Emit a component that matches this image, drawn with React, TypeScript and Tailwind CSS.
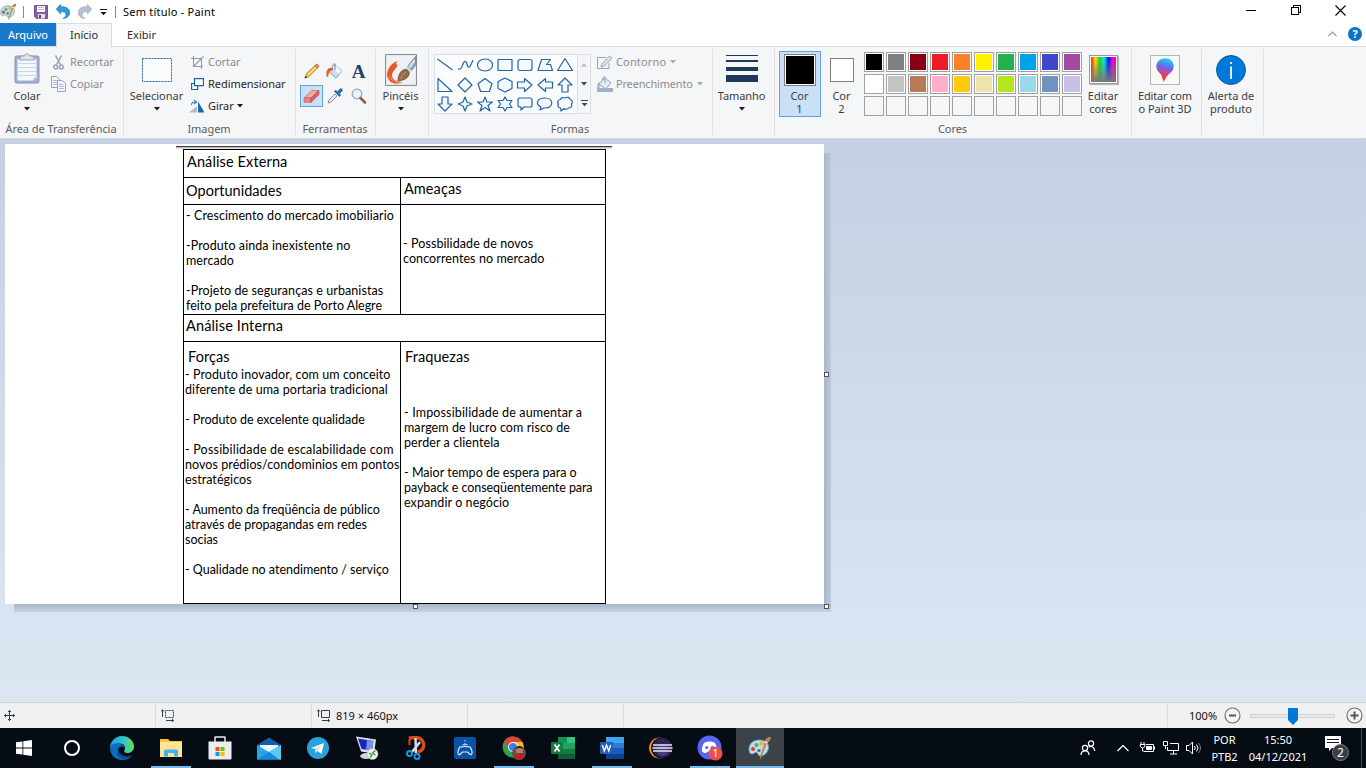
import React from "react";

type Kids = { children?: React.ReactNode };

const Down = ({ c = "#1a1a1a" }: { c?: string }) => (
  <svg width="6" height="4" viewBox="0 0 6 4" className="shrink-0"><path d="M0 0h6L3 3.4z" fill={c} /></svg>
);

function Group({ w, label, children }: Kids & { w: string; label?: string }) {
  return (
    <div className={`${w} mt-[2px] flex h-[86px] shrink-0 flex-col border-r border-[#dfe1e3]`}>
      <div className="flex h-[73px]">{children}</div>
      <div className="-ml-px h-4 whitespace-nowrap pt-px text-center leading-[17px] tracking-[-0.05px] text-[#5c5c5c]">{label}</div>
    </div>
  );
}

function Row({ icon, text, off, arrow }: { icon: React.ReactNode; text: string; off?: boolean; arrow?: boolean }) {
  return (
    <div className={`flex h-[22px] items-center ${off ? "text-[#8d8d8d]" : "text-[#262626]"}`}>
      <span className="flex w-[17px] shrink-0 items-center">{icon}</span>
      <span className="whitespace-nowrap tracking-[-0.05px]">{text}</span>
      {arrow && <span className="ml-[3px]"><Down c={off ? "#ababab" : "#1a1a1a"} /></span>}
    </div>
  );
}

const PaintIcon = ({ size }: { size: number }) => (
  <svg width={size} height={size} viewBox="0 0 24 24">
    <path d="M1 13C1 7 6 3.500 12 4c6 .3 9 4 8.500 8-.6 5-5 8.500-8.500 8-2.500-.5-1.500-3-3.500-3.500S5.500 18.500 3.500 18 1 15.500 1 13z" fill="#b8def0" stroke="#4f9fc5" strokeWidth=".9" />
    <circle cx="5" cy="13" r="2" fill="#e23b2e" /><circle cx="8.500" cy="9" r="2" fill="#55b53c" />
    <circle cx="13.500" cy="7.500" r="2" fill="#f4b51e" /><circle cx="11" cy="14.500" r="1.600" fill="#2b6f94" />
    <path d="M19 6.500 13 21.500l-1 2 .2-2.500L17 6z" fill="#e88b2b" stroke="#b9651a" strokeWidth=".4" />
    <path d="M17 5.500c0-3 3-5 6-4.500-.3 3-1.500 5-4 5.800z" fill="#b98252" />
    <path d="m16.500 6.500 2.800 1 .5-1.400-2.600-1z" fill="#e8e8e8" />
  </svg>
);

function TitleBar() {
  return (
    <div className="flex h-[23px] items-center bg-white text-black">
      <div className="flex w-[23px]"><PaintIcon size={17} /></div>
      <div className="h-3 w-px bg-[#8a8a8a]" />
      <svg className="ml-[10px]" width="14" height="14" viewBox="0 0 14 14">
        <path d="M.5.500h13v13h-11l-2-2z" fill="#8b5da8" stroke="#7a4f99" /><path d="M3 1h8v6H3z" fill="#fff" />
        <path d="M4 2.500h6M4 4.500h6" stroke="#c9b6d6" /><path d="M4 9h7v4.500H4z" fill="#e7deef" /><path d="M5 10h2v3H5z" fill="#5d3479" />
      </svg>
      <svg className="ml-[8px]" width="14" height="15" viewBox="0 0 14 15">
        <path d="M4.500.500v2.300c6-.4 9.200 1.900 9.200 5.900 0 3.200-2.700 5.400-6.700 5.900 2-1.500 3.200-2.700 3-4.400-.3-2.100-2.300-2.800-5.500-2.500v2.300L.3 5z" fill="#2f9add" stroke="#2585c5" strokeWidth=".8" />
      </svg>
      <svg className="ml-[8px]" width="14" height="15" viewBox="0 0 14 15">
        <path d="M9.500.500v2.300C3.500 2.400.3 4.700.3 8.700c0 3.200 2.700 5.400 6.700 5.900-2-1.500-3.200-2.700-3-4.400.3-2.100 2.300-2.800 5.500-2.500v2.300L13.700 5z" fill="#b5c1d0" stroke="#a1afc1" strokeWidth=".8" />
      </svg>
      <svg className="ml-[8px]" width="7" height="8" viewBox="0 0 7 8"><path d="M0 1.500h7" stroke="#111" /><path d="M.5 4h6l-3 3.200z" fill="#111" /></svg>
      <div className="ml-[8px] h-3 w-px bg-[#8a8a8a]" />
      <span className="ml-[7px] grow whitespace-pre tracking-[0.22px]">Sem título - Paint</span>
      <svg className="mr-[34px]" width="11" height="11"><path d="M0 4.500h10" stroke="#000" /></svg>
      <svg className="mr-[33px] -mt-[2px]" width="11" height="11" viewBox="0 0 11 11" fill="none" stroke="#000" shapeRendering="crispEdges"><path d="M.5 2.500h7v7h-7zM2.500 2.500v-2h7v7h-2" /></svg>
      <svg className="mr-[20px] -mt-[2px]" width="11" height="11" viewBox="0 0 11 11" stroke="#000" strokeWidth="1.100"><path d="m.5.500 10 10M10.500.500l-10 10" /></svg>
    </div>
  );
}

function Tabs() {
  return (
    <div className="flex h-6 border-b border-[#dadbdc] bg-white text-[#2b2b2b]">
      <div className="h-[23px] w-14 bg-[#1979ca] text-center leading-[23px] text-white">Arquivo</div>
      <div className="z-10 h-6 w-14 border-x border-t border-[#dadbdc] bg-[#f5f6f7] text-center leading-[21px]">Início</div>
      <div className="grow pl-[15px] leading-[24px]">Exibir</div>
      <svg className="mr-[11px] mt-[8px]" width="9" height="6" viewBox="0 0 9 6" fill="none" stroke="#9b9b9b" strokeWidth="1.200"><path d="m.5 5 4-4 4 4" /></svg>
      <div className="mr-[4px] mt-[4px] h-[14px] w-[14px] rounded-full bg-[#0c71c9] text-center text-[11px] font-bold leading-[14px] text-white">?</div>
    </div>
  );
}

const Clipboard = () => (
  <svg width="26" height="31" viewBox="0 0 26 31">
    <rect x="1" y="3" width="24" height="27" rx="1.500" fill="#9fb1d1" stroke="#8296b8" />
    <path d="M3.500 6h19v18.500l-3 3h-16z" fill="#f4f7fc" /><path d="M4 10.500h18M4 14.500h18M4 18.500h18M4 22.500h18" stroke="#c9d5e8" />
    <path d="M7 3h3.500c0-3 5-3 5 0H19l1.500 4h-15z" fill="#dde2e9" stroke="#8c97a8" strokeWidth=".8" /><path d="m19.500 27.500 3-3h-3z" fill="#b9c8e0" />
  </svg>
);

const BlueShape = ({ d }: { d: string }) => (
  <svg className="h-[19.500px] w-5" viewBox="0 0 20 19.500"><path d={d} fill="#f4f9fd" stroke="#2465a3" strokeWidth="1.200" strokeLinejoin="round" /></svg>
);

const shapes = [
  "M2.500 4 17.500 15",
  "M3 14c3 1 4-2 5-5s3-4 4 0 2 6 6-4M3 14c3 1 4-2 5-5s3-4 4 0 2 6 6-4",
  "M10 4c10 0 10 12 0 12S0 4 10 4z",
  "M3 4.500h14v11H3z",
  "M5 4.500h10a2 2 0 0 1 2 2v7a2 2 0 0 1-2 2H5a2 2 0 0 1-2-2v-7a2 2 0 0 1 2-2z",
  "M3 15.500 6.500 4.500h9l-4 5h4l2 6z",
  "M10 3.500 17.500 15.500h-15z",
  "M3 3.500 17 16.500H3z",
  "m10 3 7 7-7 7-7-7z",
  "m10 3.500 7 5.300-2.600 7.700H5.600L3 8.800z",
  "m10 3 7 3.500v7L10 17l-7-3.500v-7z",
  "M2.500 7h7V3.500L17 10l-7.500 6.500V13h-7z",
  "M17.500 7h-7V3.500L3 10l7.500 6.500V13h7z",
  "M7 17v-7H3l7-7 7 7h-4v7z",
  "M7 3v7H3l7 7 7-7h-4V3z",
  "M10 3l2 5 5 2-5 2-2 5-2-5-5-2 5-2z",
  "m10 3 2 5h5.500L13 11.500l2 5.500-5-3.500L5 17l2-5.500L2.500 8H8z",
  "m10 3 2 3.500h5L14.500 10l2.500 3.500h-5L10 17l-2-3.500H3L5.500 10 3 6.500h5z",
  "M5 4h10q2 0 2 2v5q0 2-2 2H9l-3 3v-3H5q-2 0-2-2V6q0-2 2-2z",
  "M10 4c9 0 9 10 0 10H9l-4 2 1-3C0 10 2 4 10 4z",
  "M5.500 5.500c.5-2 3-2.500 4.500-1.500 2-1.500 5-.5 5 1.500 2.500.5 3 3 1.500 4.500 1 2.500-.5 4-3 4-1 1.500-3.500 1.500-4.500.5L6 17l-.3-3c-2.500 0-3.500-2-2.200-4C1.500 8.500 3 5.500 5.500 5.500z",
];

const row1 = ["#000000", "#7f7f7f", "#880015", "#ed1c24", "#ff7f27", "#fff200", "#22b14c", "#00a2e8", "#3f48cc", "#a349a4"];
const row2 = ["#ffffff", "#c3c3c3", "#b97a57", "#ffaec9", "#ffc90e", "#efe4b0", "#b5e61d", "#99d9ea", "#7092be", "#c8bfe7"];
const swatches = [...row1, ...row2, ...Array.from({ length: 10 }, () => "")];

function Ribbon() {
  return (
    <div className="flex h-[92px] border-b border-[#d5d7da] bg-[#f5f6f7] text-[#3c3c3c]">
      <Group w="w-[124px]" label="Área de Transferência">
        <div className="ml-[5px] flex w-11 flex-col items-center pt-[4px]">
          <Clipboard /><span className="mt-[4px] leading-4">Colar</span><span className="mt-[3px]"><Down /></span>
        </div>
        <div className="ml-[4px] pt-[2px]">
          <Row off text="Recortar" icon={
            <svg width="11" height="15" viewBox="0 0 11 15" fill="none" stroke="#93a4be" strokeWidth="1.500"><path d="M2.500.500 7.700 10M8.500.500 3.300 10" /><circle cx="2.700" cy="12" r="1.900" /><circle cx="8.300" cy="12" r="1.900" /></svg>} />
          <Row off text="Copiar" icon={
            <svg className="-ml-[2px]" width="16" height="16" viewBox="0 0 16 16" fill="#f1f5fa" stroke="#91a5c4"><path d="M.5.500h5l3 3v8h-8z" /><path d="M2 4.500h4M2 6.500h4M2 8.500h4" strokeWidth=".7" /><path d="M6.500 4.500h5l3 3v8h-8z" /><path d="M8 8.500h4M8 10.500h5M8 12.500h5" strokeWidth=".7" /></svg>} />
        </div>
      </Group>
      <Group w="w-[172px]" label="Imagem">
        <div className="ml-[4px] flex w-[57px] flex-col items-center pt-[9px]">
          <svg width="30" height="24" viewBox="0 0 30 24"><path d="M.5.500h29v23H.5z" fill="#f9fbfd" stroke="#1c64a8" strokeDasharray="2 1" /></svg>
          <span className="mt-[6px] leading-4">Selecionar</span><span className="mt-[3px]"><Down /></span>
        </div>
        <div className="ml-[6px] pt-[2px]">
          <Row off text="Cortar" icon={
            <svg width="13" height="13" viewBox="0 0 13 13" fill="none" stroke="#8d9bb2" strokeWidth="1.100"><path d="M2.500 0v10.500H12M0 2.500h10.500V13M3 10l9.500-9.500" /></svg>} />
          <Row text="Redimensionar" icon={
            <svg width="13" height="12" viewBox="0 0 13 12" fill="#fff" stroke="#1c66a8" strokeWidth="1.200"><path d="M.6 5.500h6v6h-6z" /><path d="M3.500.600h9v7h-9z" /></svg>} />
          <Row arrow text="Girar" icon={
            <svg className="-ml-[2px]" width="16" height="13" viewBox="0 0 16 13"><path d="M0 12.500 8 6v6.500z" fill="#b4bcc5" /><path d="M9 1.500 15.500 12.500H9z" fill="#1b68ac" /><path d="M2.500 5c0-2.500 1.500-3 4-3M5 0l2.500 2L5 4" stroke="#3089d0" fill="none" strokeWidth="1.200" /></svg>} />
        </div>
      </Group>
      <Group w="w-[80px]" label="Ferramentas">
        <div className="ml-[4px] mt-[11px] grid h-[50px] grid-cols-[23px_24px_23px] grid-rows-[22px_28px] place-items-center">
          <svg width="16" height="16" viewBox="0 0 16 16"><path d="m1 15 1.500-4.500L11.500 2l2.500 2.500L5.500 13z" fill="#f3c64f" stroke="#a07822" strokeWidth=".8" /><path d="m10.700 2.800 1.500-1.500c1-1 3.500 1.500 2.500 2.500l-1.500 1.500z" fill="#e58d7b" stroke="#a85848" strokeWidth=".6" /><path d="m.5 15.500.9-2.700 1.800 1.800z" fill="#333" /><path d="m4 12 8-8" stroke="#fff0b0" /></svg>
          <svg width="18" height="16" viewBox="0 0 18 16"><path d="m9 2 7 6-6 7-7-6z" fill="#cddeee" stroke="#6a8bac" strokeWidth=".8" /><path d="m9 2 7 6-3 3-7-6z" fill="#edf5fb" /><path d="M9 7V.8c-2 0-2.500 1.200-2.500 3" stroke="#6486a5" fill="none" /><path d="M7 5C2 4 0 7 .5 13c.6 1.600 2 1 2-1C2.500 9 4 8 7 7z" fill="#e95c20" /></svg>
          <span className="font-['Liberation_Serif'] text-[19px] font-bold leading-none text-[#1f3f66]">A</span>
          <div className="flex h-[22px] w-[23px] items-center justify-center border border-[#62a2e4] bg-[#c9e0f7]">
            <svg width="17" height="13" viewBox="0 0 17 13"><path d="m1 8 8-7.500h7L8 8z" fill="#f7a6a5" stroke="#c95e5e" strokeWidth=".7" /><path d="M1 8h7v4.300H1z" fill="#ee8585" stroke="#c95e5e" strokeWidth=".7" /><path d="m8 8 8-7.500v4L8 12.300z" fill="#d96565" stroke="#b94f4f" strokeWidth=".7" /></svg>
          </div>
          <svg width="16" height="16" viewBox="0 0 16 16"><path d="m1 15 1-3 6-6 2 2-6 6z" fill="#e6f0f8" stroke="#5e7c9a" strokeWidth=".8" /><path d="m7.500 3.500 5 5 1.300-1.300-1.500-1.500 2.700-2.700C16 1.500 14.500 0 13 1l-2.700 2.700-1.500-1.500z" fill="#2372b6" stroke="#174f83" strokeWidth=".6" /></svg>
          <svg width="16" height="16" viewBox="0 0 16 16"><circle cx="6" cy="6" r="4.800" fill="#e7f2fb" stroke="#98a9bb" strokeWidth="1.300" /><path d="m9.500 10 4.500 4.500" stroke="#8a6142" strokeWidth="2.500" strokeLinecap="round" /></svg>
        </div>
      </Group>
      <Group w="w-[53px]">
        <div className="flex w-[50px] flex-col items-center pt-[5px]">
          <svg width="32" height="32" viewBox="0 0 32 32">
            <path d="M.5.500h31v31H.5z" fill="#e4e9ee" stroke="#8a8e93" /><path d="M2 2h28v28H2z" fill="#eef2f5" />
            <path d="M12.500 7C6 9 .5 17 2.500 23c2.500 7.500 10 8 15 5-6 0-10-2.500-10.500-6-.5-3.500 3.500-7 5-9.500 1-1.700 0-2.500-1.500-2z" fill="#ea5526" />
            <path d="M4.500 22c2.500 5 7 7 12 6.500" fill="none" stroke="#f58a58" strokeWidth="1.200" />
            <path d="m30.500 2.500-8 10 4 4 4.500-6z" fill="#93a8c0" stroke="#5c7088" strokeWidth=".7" /><path d="m29.500 5-6 7.500 1.500 1.500 5-6.500z" fill="#dfe8f0" /><path d="m22.500 12.500 4 4-3 2.500-4-4z" fill="#d8dde2" />
            <path d="M13 27c0-6 3-12 8-11.500 6 1.500 4 10.500-8 11.500z" fill="#966b43" stroke="#6e492a" strokeWidth=".7" />
            <path d="M16 25c.5-3.500 2-5 4.500-6.500" stroke="#c19b6c" fill="none" />
          </svg>
          <span className="mt-[2px] -ml-px leading-4">Pincéis</span><span className="mt-[3px]"><Down /></span>
        </div>
      </Group>
      <Group w="w-[284px]" label="Formas">
        <div className="ml-[5px] mt-[5px] flex h-[60px] w-[157px] shrink-0 border border-[#dcdfe2] bg-[#fbfcfd]">
          <div className="grid w-[142px] shrink-0 grid-cols-[repeat(7,20px)] content-start">{shapes.map((d, i) => <BlueShape key={i} d={d} />)}</div>
          <div className="flex grow flex-col items-center border-l border-[#dcdfe2] bg-[#f5f6f7] pt-[8px]">
            <svg width="6" height="4"><path d="M0 3.500h6L3 .2z" fill="#b3b8bf" /></svg>
            <span className="mt-[13px] flex h-[8px] items-center"><Down c="#2a4a70" /></span>
            <svg className="mt-[11px]" width="7" height="8" viewBox="0 0 7 8"><path d="M0 1.500h7" stroke="#2a4a70" /><path d="M.5 4h6l-3 3.200z" fill="#2a4a70" /></svg>
          </div>
        </div>
        <div className="ml-[6px] pt-[2px]">
          <div className="flex h-[22px] items-center text-[#8d8d8d]">
            <svg className="mr-[3px]" width="16" height="14" viewBox="0 0 16 14"><path d="M12 8v5.500H.5v-11H9" fill="none" stroke="#90a5c3" /><path d="m4 12 1-3.500L12.500 1 15 3.200 7.500 11z" fill="#d8e2ed" stroke="#8297b5" strokeWidth=".8" /></svg>
            <span className="tracking-[0.15px]">Contorno</span><span className="ml-1"><Down c="#ababab" /></span>
          </div>
          <div className="flex h-[22px] items-center text-[#8d8d8d]">
            <svg className="mr-[3px]" width="16" height="16" viewBox="0 0 16 16"><path d="M0 12h16v4H0z" fill="#9db0cd" /><path d="m8 2 6 5-5.500 6L2 8z" fill="#e4ebf3" stroke="#8da0bb" /><path d="M8 7V1C6 .5 5.500 2 5.500 4" fill="none" stroke="#8da0bb" /><path d="M3 6C0 7 0 10 .5 12h2z" fill="#9fb1cb" /></svg>
            <span className="tracking-[-0.18px]">Preenchimento</span><span className="ml-1"><Down c="#ababab" /></span>
          </div>
        </div>
      </Group>
      <Group w="w-[62px]">
        <div className="flex w-[57px] flex-col items-center pt-[6px]">
          <svg width="32" height="27" viewBox="0 0 32 27" fill="#1e395b"><path d="M0 0h32v1H0zM0 5h32v2H0zM0 12h32v4H0zM0 20h32v7H0z" /></svg>
          <span className="mt-[6px] leading-4 tracking-[-0.1px]">Tamanho</span><span className="mt-[3px]"><Down /></span>
        </div>
      </Group>
      <Group w="w-[357px]" label="Cores">
        <div className="ml-[4px] mt-[2px] flex h-[66px] w-[42px] flex-col items-center border border-[#62a2e4] bg-[#c9e0f7] pt-[2px] leading-[13px]">
          <div className="mb-[3px] h-8 w-8 border border-[#7f7f7f] bg-white p-px"><div className="h-full bg-black" /></div>
          <span className="-ml-px">Cor</span><span className="-ml-px">1</span>
        </div>
        <div className="mt-[2px] flex h-[66px] w-[42px] flex-col items-center pt-[7px] leading-[13px]">
          <div className="mb-[7px] h-6 w-6 border border-[#7f7f7f] bg-white" /><span className="-ml-px">Cor</span><span className="-ml-px">2</span>
        </div>
        <div className="ml-px mt-[3px] grid shrink-0 grid-cols-10 content-start gap-[2px]">
          {swatches.map((c, i) => (
            <div key={i} className="h-5 w-5 border border-[#a0a0a0] p-px" style={{ backgroundColor: c ? "#fff" : "#f5f6f7" }}>
              <div className="h-full" style={{ backgroundColor: c || "#f5f6f7" }} />
            </div>
          ))}
        </div>
        <div className="ml-[1px] flex w-[40px] flex-col items-center pt-[6px] text-center leading-[13px]">
          <div className="mb-[5px] h-[29px] w-[29px] border border-[#9a9a9a] bg-white p-px shadow-[1px_1px_1px_#bbb]">
            <div className="h-full bg-[linear-gradient(to_top,#777_0%,transparent_90%),linear-gradient(to_right,#f22,#fd0_18%,#1d1_35%,#0ee_52%,#11e_70%,#f0e_88%,#f03)]" />
          </div>
          <span>Editar</span><span>cores</span>
        </div>
      </Group>
      <Group w="w-[70px]">
        <div className="flex w-[66px] flex-col items-center pt-[6px] leading-[13px]">
          <div className="mb-[4px] flex h-[30px] w-[30px] items-center justify-center border border-[#b5b5b5] bg-[#f8f8f8]">
            <svg width="18" height="24" viewBox="0 0 18 24">
              <defs><linearGradient id="p3" x1="0.600" y1="0" x2="0.400" y2="1"><stop offset="0" stopColor="#19d0f0" /><stop offset=".4" stopColor="#6c63e8" /><stop offset=".65" stopColor="#d9409a" /><stop offset=".85" stopColor="#e8382b" /><stop offset="1" stopColor="#ffcf1a" /></linearGradient></defs>
              <path d="M9 .3c5 0 8.700 3.500 8.700 8 0 4-2.500 6-5.200 8.200C10 18.500 9.500 21 7.500 23.800c-1-2-.8-4-1.800-6.300C4.500 15 .3 13 .3 8.500.3 4 4 .3 9 .3z" fill="url(#p3)" />
              <path d="M2 12c3 3 7 2 10 5-2.500 2-2.500 4-4.500 7-1-3-1-5-2-7z" fill="#e8413f" opacity=".6" />
            </svg>
          </div>
          <span className="whitespace-nowrap tracking-[-0.15px]">Editar com</span><span className="whitespace-nowrap">o Paint 3D</span>
        </div>
      </Group>
      <Group w="w-[62px]">
        <div className="flex w-[58px] flex-col items-center pt-[6px] leading-[13px]">
          <svg className="mb-[4px]" width="30" height="30" viewBox="0 0 30 30"><circle cx="15" cy="15" r="14.500" fill="#0078d7" stroke="#0a5ca0" /><path d="M14.200 7h1.700v2h-1.700zM14.200 11.500h1.700V24h-1.700z" fill="#fff" /></svg>
          <span className="whitespace-nowrap">Alerta de</span><span>produto</span>
        </div>
      </Group>
    </div>
  );
}

function Lines({ items }: { items: string[] }) {
  return <>{items.map((t, i) => <div key={i} className="h-[15px] whitespace-pre leading-[15px]">{t}</div>)}</>;
}

const Handle = ({ at }: { at: string }) => <div className={`absolute h-[5px] w-[5px] border border-[#555] bg-white ${at}`} />;

function Workspace() {
  return (
    <div className="h-[563px] bg-gradient-to-b from-[#c5cfe1] to-[#dce6f3] pl-[5px] pt-[5px]">
      <div className="relative h-[460px] w-[819px] bg-white text-black">
        <div className="absolute left-[9px] top-[460px] h-[8px] w-[817px] bg-gradient-to-b from-[#a9b5ca] to-[#c6d2e3]" />
        <div className="absolute left-[819px] top-[9px] h-[451px] w-[7px] bg-gradient-to-r from-[#a9b5ca] to-[#bdc9dc]" />
        <Handle at="left-[819px] top-[228px]" />
        <Handle at="left-[408px] top-[460px]" />
        <Handle at="left-[819px] top-[460px]" />
        <div className="pl-[171px] pt-[2px]">
          <div className="h-[3px] w-[436px] border-t border-[#404040] bg-gradient-to-b from-[#aaa] to-[#f4f4f4]" />
          <div className="ml-[7px] flex h-[455px] w-[423px] flex-col border border-black font-[Lato] text-[12.5px] tracking-[0.08px]">
            <div className="h-[28px] border-b border-black pl-[3px] text-[14.5px] leading-[23px] tracking-[0.12px]">Análise Externa</div>
            <div className="flex h-[27px] border-b border-black text-[14.5px]">
              <div className="w-[217px] border-r border-black pl-[2px] leading-[26px] tracking-[0.03px]">Oportunidades</div>
              <div className="pl-[3px] leading-[21px]">Ameaças</div>
            </div>
            <div className="flex h-[110px] border-b border-black">
              <div className="w-[217px] border-r border-black pl-[2px] pt-[3px]">
                <Lines items={["- Crescimento do mercado imobiliario", "", "-Produto ainda inexistente no", "mercado", "", "-Projeto de seguranças e urbanistas"]} />
                <div className="tracking-[-0.02px]"><Lines items={["feito pela prefeitura de Porto Alegre"]} /></div>
              </div>
              <div className="pl-[2px] pt-[31px]"><Lines items={["- Possbilidade de novos", "concorrentes no mercado"]} /></div>
            </div>
            <div className="h-[27px] border-b border-black pl-[2px] text-[14.5px] leading-[21px] tracking-[0.15px]">Análise Interna</div>
            <div className="flex grow">
              <div className="w-[217px] border-r border-black pl-px pt-[4px]">
                <div className="h-[21px] pl-[3px] text-[14.5px] leading-[21px]">Forças</div>
                <Lines items={["- Produto inovador, com um conceito", "diferente de uma portaria tradicional", ""]} />
                <div className="tracking-[-0.03px]"><Lines items={["- Produto de excelente qualidade"]} /></div>
                <div className="h-[15px]" />
                <div className="tracking-[0.2px]"><Lines items={["- Possibilidade de escalabilidade com"]} /></div>
                <div className="tracking-[0.06px]"><Lines items={["novos prédios/condominios em pontos", "estratégicos", ""]} /></div>
                <div className="tracking-[-0.02px]"><Lines items={["- Aumento da freqüência de público", "através de propagandas em redes", "socias", "", "- Qualidade no atendimento / serviço"]} /></div>
              </div>
              <div className="pl-[3px] pt-[4px]">
                <div className="mb-[39px] h-[20px] pl-px text-[14.5px] leading-[21px]">Fraquezas</div>
                <div className="tracking-[0.15px]"><Lines items={["- Impossibilidade de aumentar a"]} /></div>
                <Lines items={["margem de lucro com risco de", "perder a clientela", ""]} />
                <div className="tracking-[0.02px]"><Lines items={["- Maior tempo de espera para o"]} /></div>
                <div className="tracking-[-0.06px]"><Lines items={["payback e conseqüentemente para"]} /></div>
                <Lines items={["expandir o negócio"]} />
              </div>
            </div>
          </div>
        </div>
      </div>
    </div>
  );
}

const ZoomButton = ({ d }: { d: string }) => (
  <svg width="17" height="17" viewBox="0 0 17 17"><circle cx="8.500" cy="8.500" r="7.500" fill="#f4f4f4" stroke="#6f6f6f" strokeWidth="1.100" /><path d={d} stroke="#555" strokeWidth="2" /></svg>
);

const SizeIcon = ({ dash }: { dash?: string }) => (
  <svg width="14" height="13" viewBox="0 0 14 13" fill="none" stroke="#27405f"><path d="M1.500 8V.8M0 2.500 1.500.800 3 2.500M5 11.500h7.500M11 10l1.700 1.500L11 13" /><path d="M4.500 1.500h8v7h-8z" strokeDasharray={dash} /></svg>
);

function StatusBar() {
  return (
    <div className="flex h-[26px] items-stretch border-t border-[#d2d4d6] bg-[#f0f0f0] text-[#111]">
      <div className="my-px flex w-[156px] items-center border-r border-[#dadada] pl-[4px]">
        <svg width="11" height="11" viewBox="0 0 11 11" stroke="#27405f" fill="none"><path d="M5.500 0v11M0 5.500h11M4 2l1.500-1.500L7 2M4 9l1.500 1.500L7 9M2 4 .5 5.500 2 7M9 4l1.500 1.500L9 7" /></svg>
      </div>
      <div className="my-px flex w-[156px] items-center border-r border-[#dadada] pl-[5px]"><SizeIcon dash="2 1" /></div>
      <div className="my-px flex w-[156px] items-center border-r border-[#dadada] pl-[5px]"><SizeIcon /><span className="ml-[5px]">819 × 460px</span></div>
      <div className="my-px w-[156px] border-r border-[#dadada]" />
      <div className="my-px w-[544px] border-r border-[#dadada]" />
      <div className="flex items-center pl-[21px]">
        <span className="w-[34.500px]">100%</span>
        <ZoomButton d="M5 8.500h7" />
        <div className="relative ml-[9.500px] h-[4px] w-[85px] border border-[#d0d3d6] bg-[#e7eaea]">
          <svg className="absolute -top-[7px] left-[37px]" width="10" height="17" viewBox="0 0 10 17"><path d="M0 0h10v12l-5 5-5-5z" fill="#0078d7" /></svg>
        </div>
        <div className="ml-[10.500px] flex"><ZoomButton d="M4.500 8.500h8M8.500 4.500v8" /></div>
      </div>
    </div>
  );
}

const taskIcons: { icon: React.ReactNode; open?: boolean; active?: boolean }[] = [
  { icon: (
    <svg width="24" height="24" viewBox="0 0 24 24">
      <defs><linearGradient id="e1" x1="0" x2="1"><stop stopColor="#1b9de2" /><stop offset=".55" stopColor="#35c1cf" /><stop offset="1" stopColor="#67e04c" /></linearGradient></defs>
      <path d="M0 12C0 5 5.500 0 12 0s12 5 12 10.500c0 4-3 6.500-6.500 6.500-2.500 0-4-1-3-3 1.500-3-.5-6.500-5-6.500C5 7.500 1 10 0 12z" fill="url(#e1)" />
      <path d="M0 12c0-3 4-5 8.500-4.500 3 .3 5.500 2 6 4-3-2-6.500-.5-6.500 3 0 5 6 8.500 11.500 6.500l2.500-1.500C20 22.500 16 24 12 24 5.500 24 0 19 0 12z" fill="#0c6ebf" />
      <path d="M8 13c-2.500 4 0 10 6 10.500 3 0 6-1.500 8-4-6 2.500-13 0-14-6.500z" fill="#0b4d9a" />
    </svg>) },
  { open: true, icon: (
    <svg width="22" height="20" viewBox="0 0 22 20"><path d="M0 1h8l2 2h12v16H0z" fill="#f9c332" /><path d="M0 4h22v15H0z" fill="#ffe498" /><path d="M4 18.500V13q0-1.500 1.500-1.500h11Q18 11.500 18 13v5.500h-4V15H8v3.500z" fill="#41b1e8" /></svg>) },
  { icon: (
    <svg width="24" height="24" viewBox="0 0 24 24"><path d="M7 8V1.500Q7 1 7.500 1h9q.5 0 .5.500V8" stroke="#e9e9e9" strokeWidth="1.500" fill="none" /><path d="M.5 5.500h23v17q0 1-1 1h-21q-1 0-1-1z" fill="#ededed" /><path d="M7.500 11h4v4h-4z" fill="#f04f23" /><path d="M12.500 11h4v4h-4z" fill="#7fba00" /><path d="M7.500 16h4v4h-4z" fill="#00a3ee" /><path d="M12.500 16h4v4h-4z" fill="#ffb900" /></svg>) },
  { icon: (
    <svg width="24" height="23" viewBox="0 0 24 23"><path d="M0 8 12 .5 24 8v6H0z" fill="#145da8" /><path d="M3 8h18v8H3z" fill="#edf4f9" /><path d="m0 8 12 7 12-7v14.500H0z" fill="#27a6ea" /><path d="M12 15 24 8v14.500H22z" fill="#5bc7f5" /><path d="m0 22.500 12-7.500 10 7.500z" fill="#1689dc" /></svg>) },
  { icon: (
    <svg width="22" height="22" viewBox="0 0 22 22"><circle cx="11" cy="11" r="11" fill="#2ba1d9" /><path d="m4 11 13-5-2.500 11-4-3-2 2-.5-4z" fill="#fff" /><path d="m8 12 7-4-5 6-1.500 2z" fill="#bedbed" /></svg>) },
  { icon: (
    <svg width="24" height="24" viewBox="0 0 24 24"><path d="m1 .5 20 3-2 14-13-2z" fill="#dfe2e5" /><path d="m3 2.500 15.500 2.500L17 14.500 6.500 13z" fill="#1525bd" /><path d="m12 4 6.500 1L17 14.500l-6-1z" fill="#7790ea" /><path d="M5 20c2-4 10-4 12 0-1 4-11 4-12 0z" fill="#d3d6d8" /><circle cx="17.500" cy="18" r="5.500" fill="#eef2ee" stroke="#aaa" strokeWidth=".5" /><path d="m14 17 3 2-2 2.500M20.500 14.500l-3 2.500 3 2" fill="none" stroke="#3b9a35" strokeWidth="1.300" /></svg>) },
  { icon: (
    <svg width="20" height="24" viewBox="0 0 20 24"><path d="M3 2.500c4-1.500 8-1 11 0 3.500 2 4.500 6 3 9.500-1.200 2.500-2.500 3.500-5 4" fill="none" stroke="#d64a1c" strokeWidth="3.500" /><path d="M3.500 3v6" stroke="#d64a1c" strokeWidth="2" /><path d="m9.500 2 .5 15M14 6 6 16" stroke="#dadde0" strokeWidth="2.500" /><circle cx="3.500" cy="17.500" r="2.500" fill="none" stroke="#1697de" strokeWidth="2" /><circle cx="11" cy="20.500" r="2.500" fill="none" stroke="#1697de" strokeWidth="2" /></svg>) },
  { icon: (
    <svg width="22" height="22" viewBox="0 0 22 22" fill="none"><rect width="22" height="22" rx="2" fill="#0953a5" /><path d="M4.500 17.500c-1.500-1 0-6 1.500-7.500 1.500-.7 8.500-.7 10 0 1.500 1.500 3 6.500 1.500 7.500s-2.500-1.500-4-2.500h-5c-1.500 1-2.500 3.500-4 2.500z" stroke="#dceeff" strokeWidth="1.200" /><path d="M11 3v1.500M11 6v1.500M8.500 7.800h5" stroke="#dceeff" /></svg>) },
  { open: true, icon: (
    <svg width="24" height="24" viewBox="0 0 24 24"><circle cx="11" cy="11" r="10.500" fill="#2ca24d" /><path d="M2 5.500A10.500 10.500 0 0 1 20.300 6H11L7 13z" fill="#e14436" /><path d="M11 6h9.500A10.500 10.500 0 0 1 11 21.500l5-9z" fill="#fbc116" /><circle cx="11" cy="11" r="5" fill="#fff" /><circle cx="11" cy="11" r="4" fill="#3b7ded" /><circle cx="17" cy="17" r="7" fill="#5b5147" /><path d="M14 14c0-5 7-5 7 0v3h-7z" fill="#a98169" /><path d="M14 13c1-4 6-4 7 0l-2-1h-3z" fill="#251c17" /><path d="M11.500 21c2-5 9-5 11 0-2 4-9 4-11 0z" fill="#b52329" /></svg>) },
  { icon: (
    <svg width="24" height="22" viewBox="0 0 24 22"><path d="M7 0h17v22H7z" fill="#21a366" /><path d="M7 0h9v6H7z" fill="#169154" /><path d="M7 12h17v10H7z" fill="#107c41" /><path d="M7 17h17v5H7z" fill="#125c36" /><path d="M16 0h8v6h-8z" fill="#33c481" /><rect y="5" width="12" height="12" rx="1" fill="#107c41" /><path d="m3.500 7.500 5 7m0-7-5 7" stroke="#fff" strokeWidth="1.800" /></svg>) },
  { open: true, icon: (
    <svg width="24" height="22" viewBox="0 0 24 22"><path d="M6 0h18v6H6z" fill="#41a5ee" /><path d="M6 6h18v5H6z" fill="#2b7cd3" /><path d="M6 11h18v6H6z" fill="#185abd" /><path d="M6 17h18v5H6z" fill="#103f91" /><rect y="5" width="13" height="12" rx="1" fill="#1f5dbd" /><path d="m2.300 8 2 6 2.200-6 2.200 6 2-6" fill="none" stroke="#fff" strokeWidth="1.400" /></svg>) },
  { icon: (
    <svg width="24" height="22" viewBox="0 0 24 22"><circle cx="10.500" cy="11" r="10.500" fill="#f7941e" /><circle cx="12.500" cy="11" r="10.500" fill="#050b13" /><circle cx="13.500" cy="11" r="10" fill="#2c2255" /><circle cx="13.500" cy="13" r="6" fill="#493b7c" /><path d="M4 8h19M3.500 11h20M4 14h19" stroke="#e9e6f2" strokeWidth="1.400" /></svg>) },
  { open: true, icon: (
    <svg width="26" height="26" viewBox="0 0 26 26"><circle cx="12.500" cy="12.500" r="12" fill="#5865f2" /><path d="M7.500 7.500Q12.500 5.500 17.500 7.500q3 4 2.500 9-2 1.700-4 1.700l-1-1.500h-5l-1 1.500q-2 0-4-1.700-.5-5 2.500-9z" fill="#fff" /><circle cx="9.800" cy="12.500" r="1.600" fill="#5865f2" /><circle cx="15.300" cy="12.500" r="1.600" fill="#5865f2" /><circle cx="18.500" cy="18.500" r="7" fill="#ec4f52" /><text x="18.500" y="22.300" textAnchor="middle" fontFamily="Noto Sans, sans-serif" fontSize="10.500" fill="#fff">1</text></svg>) },
  { open: true, active: true, icon: <PaintIcon size={24} /> },
];

function Taskbar() {
  return (
    <div className="flex h-10 items-stretch bg-[#060c14] text-white">
      <div className="flex w-12 items-center justify-center">
        <svg width="16" height="16" viewBox="0 0 16 16" fill="#fff"><path d="M0 2.300 6.500 1.400v6.100H0zM7.300 1.300 16 0v7.500H7.300zM0 8.400h6.500v6.200L0 13.700zM7.300 8.400H16V16l-8.700-1.300z" /></svg>
      </div>
      <div className="mr-[3px] flex w-12 items-center justify-center"><div className="h-4 w-4 rounded-full border-2 border-white" /></div>
      <div className="flex">
        {taskIcons.map((t, i) => (
          <div key={i} className={`flex flex-col ${t.active ? "w-12 items-center bg-[#3d4248]" : "w-[49px] items-center pr-[3px]"}`}>
            <div className="flex h-[38px] items-center pt-[2px]">{t.icon}</div>
            {t.open && <div className={`h-[2px] bg-[#76b9ed] ${t.active ? "w-full" : "w-10"}`} />}
          </div>
        ))}
      </div>
      <div className="flex grow items-center justify-end">
        <svg className="mr-[21px]" width="16" height="16" viewBox="0 0 16 16" fill="none" stroke="#fff" strokeWidth="1.200"><circle cx="5" cy="8" r="2.600" /><path d="M1 15c0-5.500 8-5.500 8 0" /><circle cx="11" cy="3.500" r="2.600" /><path d="M8.500 7c3-1.500 6 0 6.200 4" /></svg>
        <svg className="mr-[10px]" width="12" height="7" viewBox="0 0 12 7" fill="none" stroke="#fff" strokeWidth="1.200"><path d="m.5 6 5.500-5.500L11.500 6" /></svg>
        <svg className="mr-[8px]" width="16" height="12" viewBox="0 0 16 12" fill="none" stroke="#fff"><path d="M2 0v2M5 0v2M1 2.500h5V4Q5.500 6 3.500 6 1 5.500 1 3M3.500 6v3H5M7 2.500h7.500v7H5" /><path d="M7.500 4.500h5v3h-5z" fill="#fff" /><path d="M15.500 4.500v3" /></svg>
        <svg className="mr-[7px]" width="16" height="14" viewBox="0 0 16 14" fill="none" stroke="#fff"><path d="M7 2.500h8.500v7H4.500V6M10.500 9.500V13M7 13h7M.5.500h4v4h-4zM2.500 5v3" /></svg>
        <svg className="mr-[8px]" width="16" height="14" viewBox="0 0 16 14" fill="none" stroke="#fff"><path d="M.5 4.500H3L6.500 1v12L3 9.500H.5zM8.500 5q1.500 2 0 4M10.500 3.500q3 3.500 0 7" /><path d="M12.500 2q4 5 0 10" stroke="#777" /></svg>
        <div className="w-[29px] whitespace-nowrap text-center text-[11px] leading-[17px]">POR<br />PTB2</div>
        <div className="ml-[9px] w-[60px] whitespace-nowrap text-center text-[11px] leading-[17px]">15:50<br />04/12/2021</div>
        <svg className="ml-[16px]" width="26" height="26" viewBox="0 0 26 26"><path d="M1 1h16v12H8l-3 3v-3H1z" fill="#fff" /><path d="M3 4.500h12M3 7.500h12" stroke="#111820" /><circle cx="16.500" cy="17.500" r="8" fill="#3c4046" stroke="#777b80" /><text x="16.500" y="22" textAnchor="middle" fontFamily="Noto Sans, sans-serif" fontSize="12" fill="#fff">2</text></svg>
        <div className="mr-[4px] ml-[11px] h-full w-px bg-[#484d53]" />
      </div>
    </div>
  );
}

export default function App() {
  return (
    <div className="h-[768px] w-[1366px] overflow-hidden font-['Noto_Sans',sans-serif] text-[11px] leading-4">
      <TitleBar />
      <Tabs />
      <Ribbon />
      <Workspace />
      <StatusBar />
      <Taskbar />
    </div>
  );
}
